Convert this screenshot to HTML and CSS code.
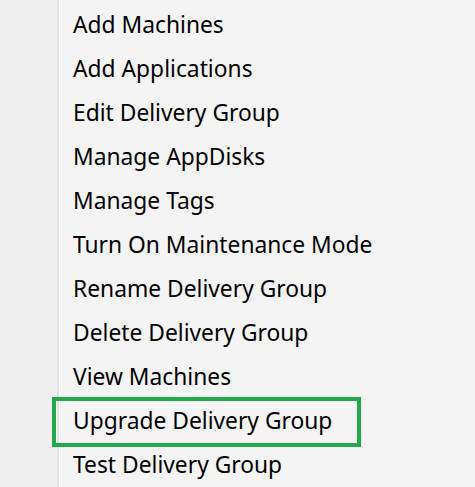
FILE: index.html
```html
<!DOCTYPE html>
<html>
<head>
<meta charset="utf-8">
<link rel="stylesheet" href="styles.css">
</head>
<body>
<div class="menu">
  <div class="gutter"></div>
  <ul class="items">
    <li class="item">Add Machines</li>
    <li class="item">Add Applications</li>
    <li class="item">Edit Delivery Group</li>
    <li class="item">Manage AppDisks</li>
    <li class="item">Manage Tags</li>
    <li class="item">Turn On Maintenance Mode</li>
    <li class="item">Rename Delivery Group</li>
    <li class="item">Delete Delivery Group</li>
    <li class="item">View Machines</li>
    <li class="item item--highlight">Upgrade Delivery Group</li>
    <li class="item">Test Delivery Group</li>
  </ul>
</div>
</body>
</html>
```
FILE: styles.css
```css
html, body {
  margin: 0;
  padding: 0;
  background: #f4f4f4;
}
.menu {
  display: flex;
  width: 475px;
  height: 487px;
  overflow: hidden;
  background: #f4f4f4;
}
.gutter {
  width: 57px;
  flex: none;
  background: #f0f0f0;
  border-right: 2px solid #e2e2e2;
  box-shadow: 1px 0 0 #ffffff;
}
.items {
  list-style: none;
  margin: 0;
  padding: 0 0 0 14px;
  flex: 1;
}
.item {
  position: relative;
  height: 44px;
  line-height: 44px;
  padding-top: 3px;
  box-sizing: border-box;
  font-family: "Noto Sans", "Open Sans", sans-serif;
  font-size: 22.8px;
  color: #000;
  white-space: nowrap;
}
.item--highlight::after {
  content: "";
  position: absolute;
  top: 1px;
  left: -21px;
  width: 309px;
  height: 50px;
  box-sizing: border-box;
  border: 4px solid #23a94a;
}
```
